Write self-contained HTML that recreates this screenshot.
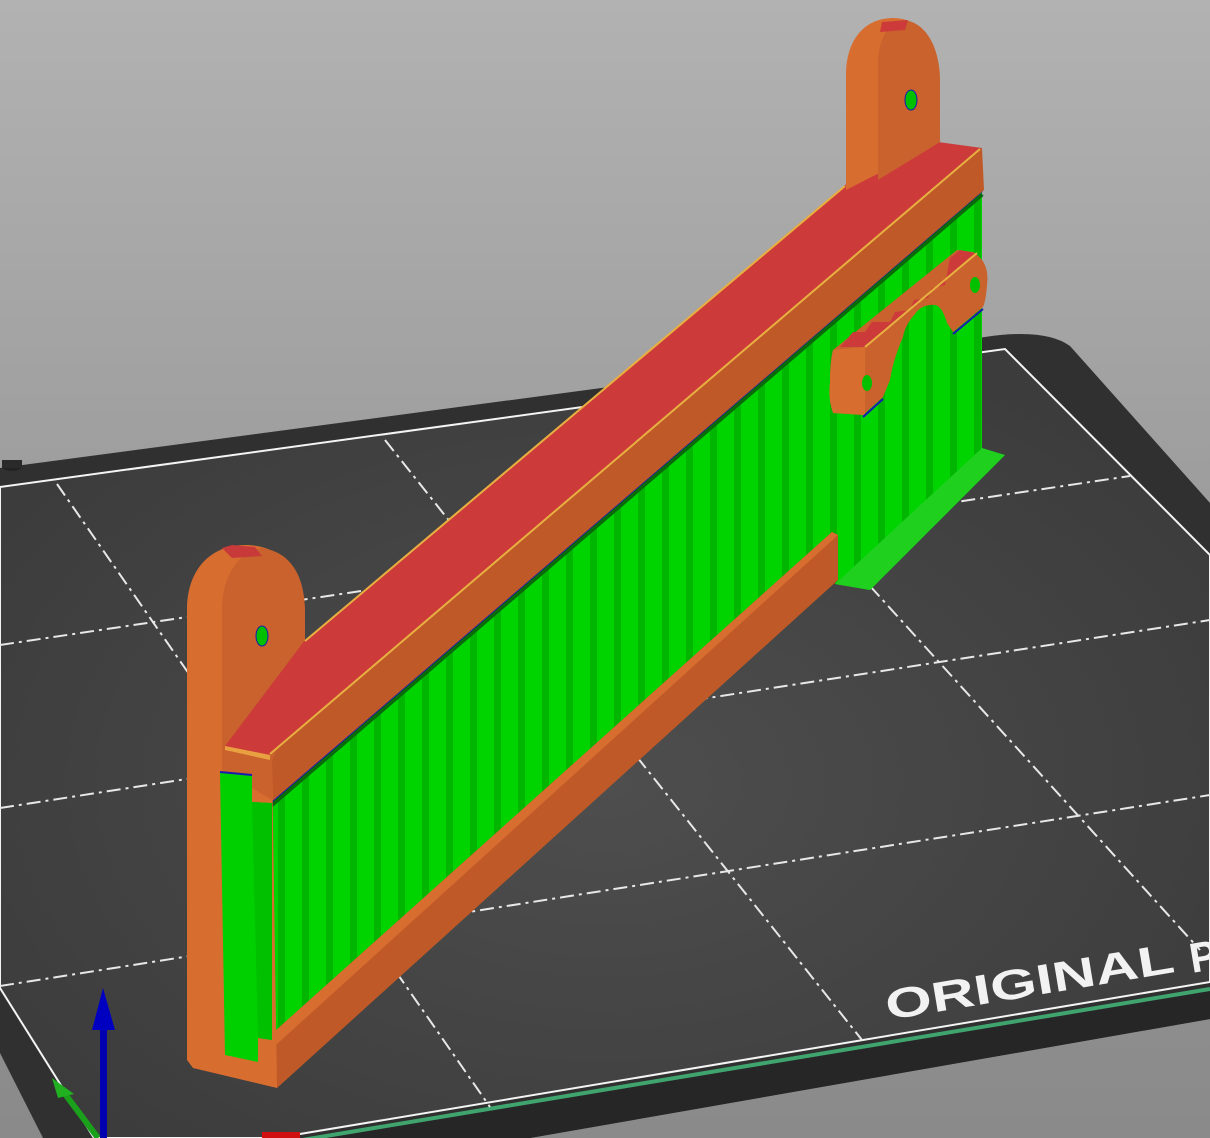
<!DOCTYPE html>
<html><head><meta charset="utf-8"><style>html,body{margin:0;padding:0;background:#999}svg{display:block}</style></head>
<body>
<svg width="1210" height="1138" viewBox="0 0 1210 1138" xmlns="http://www.w3.org/2000/svg">
<defs>
<linearGradient id="bg" x1="0" y1="0" x2="0" y2="1">
<stop offset="0" stop-color="#b2b2b2"/><stop offset="0.5" stop-color="#9a9a9a"/><stop offset="1" stop-color="#8a8a8a"/>
</linearGradient>
<radialGradient id="bed" cx="0.5" cy="0.55" r="0.6">
<stop offset="0" stop-color="#4e4e4e"/><stop offset="1" stop-color="#3c3c3c"/>
</radialGradient>
<pattern id="gs" width="24" height="40" patternUnits="userSpaceOnUse">
<rect width="24" height="40" fill="#00d400"/><rect x="14" width="7" height="40" fill="#00b600"/>
</pattern>
</defs>
<rect width="1210" height="1138" fill="url(#bg)"/>

<!-- bed outer -->
<path d="M0,468 L985,337 Q1045,328 1070,346 L1210,503 L1210,1019 L850,1082 L530,1138 L43,1138 L0,1053 Z" fill="#303030"/>
<path d="M1210,990 L1210,1019 L850,1082 L530,1138 L300,1138 Z" fill="#262626"/>
<ellipse cx="12" cy="466" rx="10" ry="5" fill="#222"/>
<rect x="2" y="460" width="20" height="8" fill="#2a2a2a"/>
<!-- inner -->
<path d="M0,487 L1005,349 L1210,555 L1210,982 L863,1040 L276,1138 L94,1138 L0,988 Z" fill="url(#bed)" stroke="#f4f4f4" stroke-width="2"/>
<line x1="290" y1="1142" x2="1210" y2="989" stroke="#3fa46e" stroke-width="4"/>

<!-- grid -->
<g stroke="#e8e8e8" stroke-width="2" stroke-dasharray="14 5 3 5" fill="none">
<line x1="0" y1="645" x2="1130" y2="476"/>
<line x1="0" y1="808" x2="1210" y2="620"/>
<line x1="0" y1="986" x2="1210" y2="795"/>
<line x1="57" y1="484" x2="490" y2="1107"/>
<line x1="385" y1="440" x2="862" y2="1040"/>
<line x1="870" y1="586" x2="1200" y2="950"/>
</g>

<text x="888" y="1020" transform="rotate(-9.5 888 1020)" font-family="Liberation Sans, sans-serif" font-weight="bold" font-size="42" fill="#f2f2f2" textLength="292" lengthAdjust="spacingAndGlyphs">ORIGINAL</text>
<text x="1192" y="973" transform="rotate(-9.5 1192 973)" font-family="Liberation Sans, sans-serif" font-weight="bold" font-size="42" fill="#f2f2f2">P</text>

<!-- green wall -->
<path d="M270,800 L982,188 L982,450 L1005,455 L870,590 L835,584 L835,535 L270,1040 Z" fill="url(#gs)"/>
<path d="M835,584 L870,590 L1005,455 L982,448 Z" fill="#1fd01f"/>
<!-- bottom rail -->
<path d="M265,1040 L832,532 L838,535 L838,580 L277,1088 Z" fill="#bf5a28"/>
<path d="M265,1040 L832,532 L838,535 L277,1044 Z" fill="#d86d30"/>
<!-- lip -->
<line x1="270" y1="806" x2="982" y2="194" stroke="#0a6a0a" stroke-width="5"/>
<line x1="270" y1="803" x2="982" y2="191" stroke="#1a1ab0" stroke-width="2"/>
<path d="M270,755 L982,148 L984,190 L270,803 Z" fill="#bf5a28"/>

<!-- left column + tab -->
<path d="M187,1060 L187,610 C187,568 212,545 245,545 C282,545 305,572 305,612 L305,690 L272,760 L277,1088 L193,1068 Z" fill="#d86d30"/>
<path d="M222,610 C222,575 240,550 262,548 C290,552 305,575 305,612 L305,690 L272,760 L272,800 L222,770 Z" fill="#c9622c"/>
<ellipse cx="262" cy="636" rx="6" ry="10" fill="#00c000" stroke="#1a1ab0" stroke-width="1"/>
<path d="M222,548 L232,545 L255,547 L262,556 L232,558 Z" fill="#c83a3a"/>
<!-- left pocket -->
<path d="M220,772 L252,775 L252,802 L272,803 L272,1040 L258,1038 L258,1062 L225,1055 Z" fill="#00d000"/>
<path d="M252,802 L272,803 L272,1040 L258,1038 Z" fill="#00c000"/>
<line x1="220" y1="772" x2="252" y2="775" stroke="#1a1ab0" stroke-width="2"/>

<!-- red top -->
<path d="M225,746 L305,640 L845,185 L938,142 L982,148 L270,755 Z" fill="#cc3b3a"/>
<line x1="305" y1="641" x2="845" y2="186" stroke="#e8b040" stroke-width="2"/>
<line x1="270" y1="754" x2="980" y2="149" stroke="#e8b040" stroke-width="2"/>
<path d="M225,746 L270,755 L270,760 L225,750 Z" fill="#e8a040"/>

<!-- right tab -->
<path d="M846,190 L846,75 C846,38 866,18 893,18 C922,18 940,45 940,82 L940,142 Z" fill="#d86d30"/>
<path d="M878,180 L878,60 C880,32 893,20 905,20 C928,24 940,50 940,82 L940,142 Z" fill="#c9622c"/>
<path d="M882,22 L908,20 L905,30 L880,32 Z" fill="#cc3b3a"/>
<ellipse cx="911" cy="100" rx="6" ry="10" fill="#00c000" stroke="#1a1ab0" stroke-width="1"/>

<!-- right bracket -->
<path d="M833,350 L957,250 L973,252 Q990,262 987,285 Q986,300 983,307 L953,332 L947,323 Q942,306 935,305 Q922,304 915,314 Q905,325 903,337 Q893,360 890,380 L883,397 L863,415 L833,413 Q828,398 830,383 Q830,362 833,350 Z" fill="#c9622c"/>
<path d="M833,350 L865,347 L865,415 L833,413 Q828,398 830,383 Q830,362 833,350 Z" fill="#d86d30"/>
<path d="M853,332 L865,332 L872,322 L890,322 L895,312 L910,310 L914,300 L928,298 L932,288 L945,285 L950,258 L960,250 L975,253 L865,347 L840,347 Z" fill="#cc3b3a"/>
<line x1="865" y1="347" x2="977" y2="253" stroke="#e8b040" stroke-width="2"/>
<ellipse cx="867" cy="383" rx="5" ry="8" fill="#00c000"/>
<ellipse cx="975" cy="285" rx="5" ry="8" fill="#00c000"/>
<line x1="863" y1="417" x2="883" y2="399" stroke="#1a1ab0" stroke-width="2"/>
<line x1="953" y1="334" x2="983" y2="309" stroke="#1a1ab0" stroke-width="2"/>

<!-- axes -->
<rect x="100" y="1028" width="7" height="110" fill="#0000b0"/>
<path d="M92,1030 L115,1030 L103,988 Z" fill="#0000c0"/>
<line x1="98" y1="1138" x2="62" y2="1090" stroke="#1aa01a" stroke-width="6"/>
<path d="M52,1078 L74,1094 L58,1098 Z" fill="#20b020"/>
<path d="M262,1132 L300,1132 L300,1138 L262,1138 Z" fill="#d01010"/>
</svg>
</body></html>
